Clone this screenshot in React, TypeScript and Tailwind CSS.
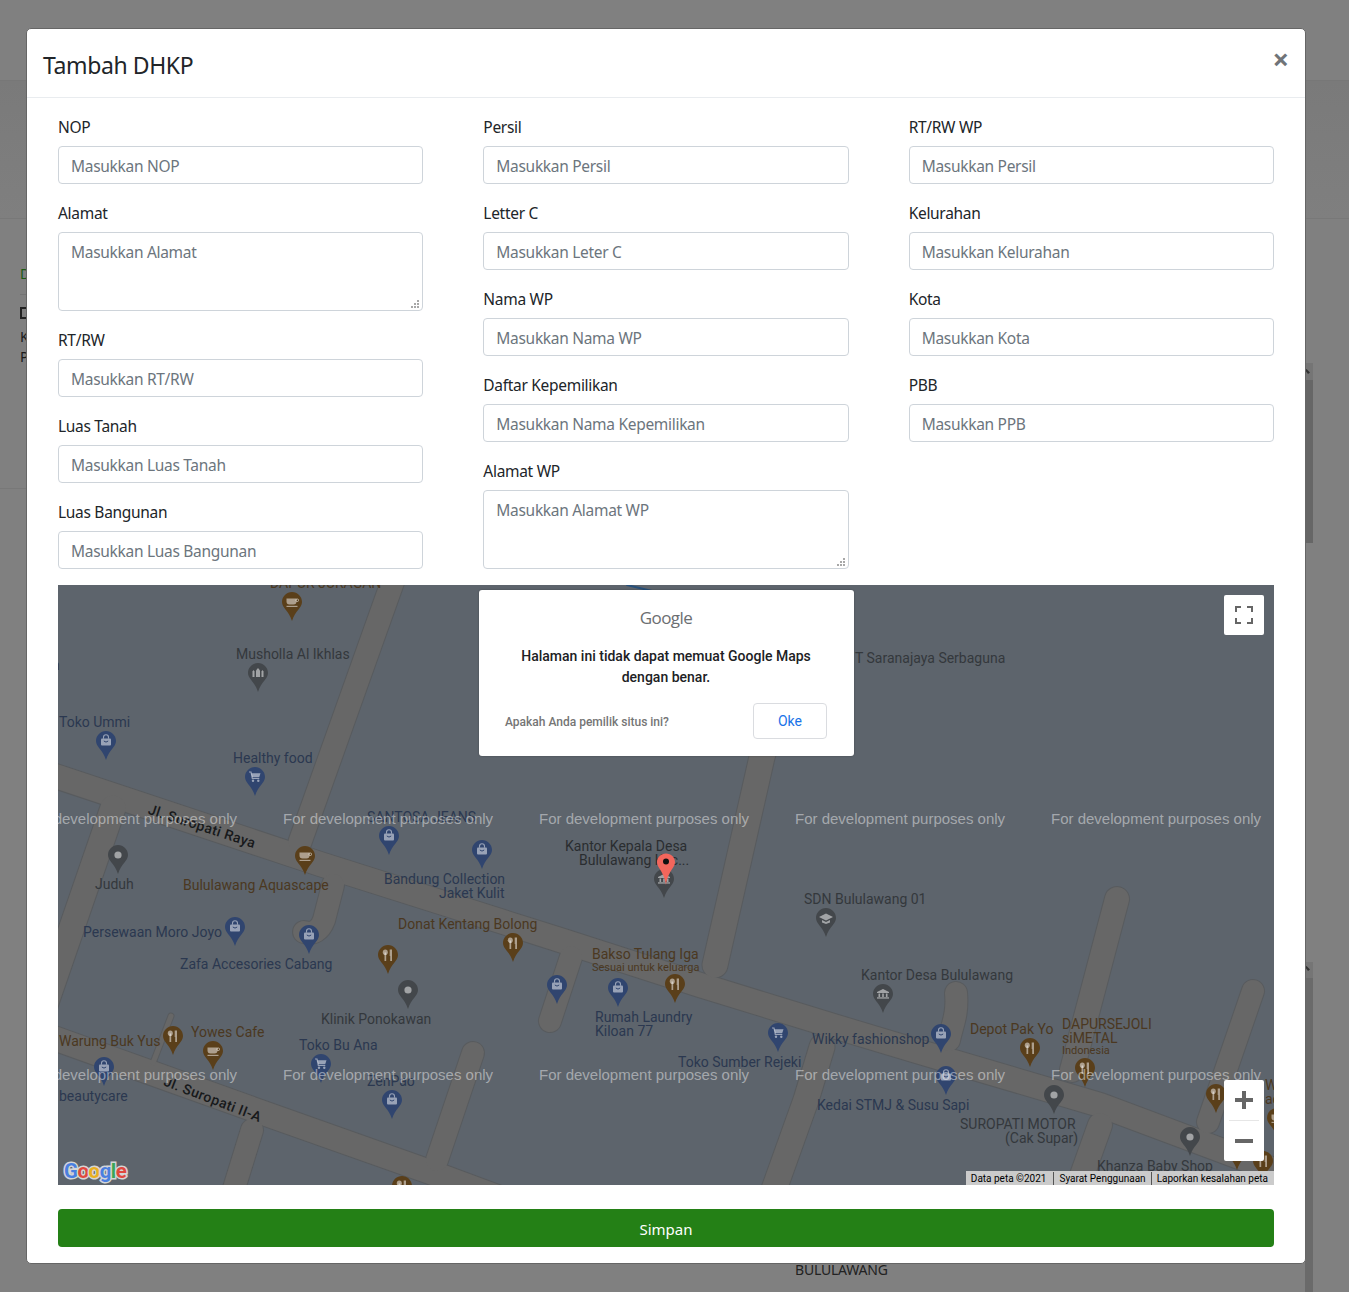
import React from 'react';

type Field = { label: string; placeholder: string; area?: boolean };

const columns: Field[][] = [
  [
    { label: 'NOP', placeholder: 'Masukkan NOP' },
    { label: 'Alamat', placeholder: 'Masukkan Alamat', area: true },
    { label: 'RT/RW', placeholder: 'Masukkan RT/RW' },
    { label: 'Luas Tanah', placeholder: 'Masukkan Luas Tanah' },
    { label: 'Luas Bangunan', placeholder: 'Masukkan Luas Bangunan' },
  ],
  [
    { label: 'Persil', placeholder: 'Masukkan Persil' },
    { label: 'Letter C', placeholder: 'Masukkan Leter C' },
    { label: 'Nama WP', placeholder: 'Masukkan Nama WP' },
    { label: 'Daftar Kepemilikan', placeholder: 'Masukkan Nama Kepemilikan' },
    { label: 'Alamat WP', placeholder: 'Masukkan Alamat WP', area: true },
  ],
  [
    { label: 'RT/RW WP', placeholder: 'Masukkan Persil' },
    { label: 'Kelurahan', placeholder: 'Masukkan Kelurahan' },
    { label: 'Kota', placeholder: 'Masukkan Kota' },
    { label: 'PBB', placeholder: 'Masukkan PPB' },
  ],
];

// roads in page coordinates: [width, path]
const roads: [number, string][] = [
  [24, 'M10 761 L320 864 L560 940 L700 985 L830 1025 L920 1052 L1100 1105 L1290 1176'],
  [24, 'M20 1026 L255 1110 L430 1172 L500 1198'],
  [23, 'M395 575 L300 842'],
  [25, 'M790 660 L762 757 L715 965'],
  [25, 'M113 808 L40 1020'],
  [22, 'M333 885 L324 920 Q318 936 304 932'],
  [22, 'M252 1130 L232 1195'],
  [22, 'M473 1053 L437 1160'],
  [22, 'M571 957 L550 1021'],
  [25, 'M822 1047 L806 1100 L772 1195'],
  [24, 'M1117 899 L1072 1070'],
  [22, 'M956 993 C958 1015 952 1025 949 1040'],
  [22, 'M1253 991 L1208 1122'],
  [24, 'M1100 1125 L1075 1195'],
  [5, 'M171 1016 L153 1063'],
];

type Tone = 'blue' | 'brown' | 'gray' | 'dark';

const toneClass: Record<Tone, string> = {
  blue: 'text-[#2b3850]',
  brown: 'text-[#4b3821]',
  gray: 'text-[#34383c]',
  dark: 'text-[#2a2d30]',
};

const labels: [string, number, number, Tone, boolean?][] = [
  ['DAPUR JURAGAN', 270, 583, 'brown'],
  ['n', 52, 665, 'gray'],
  ['Musholla Al Ikhlas', 236, 654, 'gray'],
  ['Toko Ummi', 59, 722, 'blue'],
  ['Healthy food', 233, 758, 'blue'],
  ['SANTOSA JEANS', 367, 817, 'blue'],
  ['Juduh', 95, 884, 'gray'],
  ['Bululawang Aquascape', 183, 885, 'brown'],
  ['Bandung Collection', 384, 879, 'blue'],
  ['Jaket Kulit', 439, 893, 'blue'],
  ['Kantor Kepala Desa', 565, 846, 'dark'],
  ['Bululawang Kec...', 579, 860, 'dark'],
  ['Persewaan Moro Joyo', 83, 932, 'blue'],
  ['Zafa Accesories Cabang', 180, 964, 'blue'],
  ['Donat Kentang Bolong', 398, 924, 'brown'],
  ['Klinik Ponokawan', 321, 1019, 'gray'],
  ['Warung Buk Yus', 59, 1041, 'brown'],
  ['Yowes Cafe', 191, 1032, 'brown'],
  ['Toko Bu Ana', 299, 1045, 'blue'],
  ['ZenPao', 367, 1081, 'blue'],
  ['beautycare', 59, 1096, 'blue'],
  ['Bakso Tulang Iga', 592, 954, 'brown'],
  ['Sesuai untuk keluarga', 592, 967, 'brown', true],
  ['Rumah Laundry', 595, 1017, 'blue'],
  ['Kiloan 77', 595, 1031, 'blue'],
  ['Toko Sumber Rejeki', 678, 1062, 'blue'],
  ['Wikky fashionshop', 812, 1039, 'blue'],
  ['Kedai STMJ & Susu Sapi', 817, 1105, 'blue'],
  ['T Saranajaya Serbaguna', 855, 658, 'gray'],
  ['SDN Bululawang 01', 804, 899, 'gray'],
  ['Kantor Desa Bululawang', 861, 975, 'gray'],
  ['Depot Pak Yo', 970, 1029, 'brown'],
  ['DAPURSEJOLI', 1062, 1024, 'brown'],
  ['siMETAL', 1062, 1038, 'brown'],
  ['Indonesia', 1062, 1050, 'brown', true],
  ['SUROPATI MOTOR', 960, 1124, 'gray'],
  ['(Cak Supar)', 1005, 1138, 'gray'],
  ['Khanza Baby Shop', 1097, 1166, 'gray'],
  ['Wa', 1265, 1085, 'brown'],
  ['ac', 1265, 1099, 'brown'],
];

type Glyph = 'bag' | 'cart' | 'cup' | 'fork' | 'dot' | 'mosque' | 'bank' | 'school';

const pinColor: Record<'blue' | 'brown' | 'gray', string> = {
  blue: '#30456f',
  brown: '#5a3f1a',
  gray: '#43474b',
};

const pins: [number, number, Glyph, 'blue' | 'brown' | 'gray'][] = [
  [292, 592, 'cup', 'brown'],
  [258, 663, 'mosque', 'gray'],
  [106, 731, 'bag', 'blue'],
  [255, 767, 'cart', 'blue'],
  [118, 845, 'dot', 'gray'],
  [305, 846, 'cup', 'brown'],
  [389, 826, 'bag', 'blue'],
  [482, 840, 'bag', 'blue'],
  [664, 869, 'bank', 'gray'],
  [826, 908, 'school', 'gray'],
  [235, 917, 'bag', 'blue'],
  [309, 925, 'bag', 'blue'],
  [388, 945, 'fork', 'brown'],
  [408, 980, 'dot', 'gray'],
  [513, 933, 'fork', 'brown'],
  [557, 975, 'bag', 'blue'],
  [618, 978, 'bag', 'blue'],
  [675, 974, 'fork', 'brown'],
  [778, 1023, 'cart', 'blue'],
  [883, 984, 'bank', 'gray'],
  [941, 1024, 'bag', 'blue'],
  [173, 1026, 'fork', 'brown'],
  [213, 1041, 'cup', 'brown'],
  [104, 1057, 'bag', 'blue'],
  [321, 1054, 'cart', 'blue'],
  [392, 1090, 'bag', 'blue'],
  [1030, 1038, 'fork', 'brown'],
  [1085, 1058, 'fork', 'brown'],
  [946, 1066, 'bag', 'blue'],
  [1054, 1085, 'dot', 'gray'],
  [1190, 1127, 'dot', 'gray'],
  [1216, 1084, 'fork', 'brown'],
  [1277, 1108, 'cup', 'brown'],
  [1263, 1151, 'fork', 'brown'],
  [1237, 1141, 'fork', 'brown'],
  [402, 1176, 'fork', 'brown'],
];

function PinGlyph({ kind, color }: { kind: Glyph; color: string }) {
  const c = 'rgba(255,255,255,0.5)';
  switch (kind) {
    case 'bag':
      return (
        <g>
          <path d="M7.5 7.500V6.200a2.500 2.500 0 0 1 5 0v1.300" fill="none" stroke={c} strokeWidth="1.100" />
          <rect x="5" y="7.500" width="10" height="7" rx="1" fill={c} />
          <path d="M7.800 10q2.200 2.200 4.400 0" fill="none" stroke={color} strokeWidth="1" />
        </g>
      );
    case 'cart':
      return (
        <g>
          <path d="M4 5h2l1.300 6.500h7" fill="none" stroke={c} strokeWidth="1.200" />
          <path d="M6.300 6.200h9.200l-1.300 4h-7z" fill={c} />
          <circle cx="8" cy="13.800" r="1.200" fill={c} />
          <circle cx="13.300" cy="13.800" r="1.200" fill={c} />
        </g>
      );
    case 'cup':
      return (
        <g>
          <path d="M4.500 6.500h10v3a3 3 0 0 1-3 3h-4a3 3 0 0 1-3-3z" fill={c} />
          <rect x="14" y="7" width="2.500" height="2.500" rx="1" fill="none" stroke={c} strokeWidth="1" />
          <rect x="4.500" y="13.800" width="11" height="1.200" fill={c} />
        </g>
      );
    case 'fork':
      return (
        <g>
          <ellipse cx="7.300" cy="7.300" rx="2.500" ry="2.800" fill={c} />
          <rect x="6.500" y="7.500" width="1.700" height="8.500" fill={c} />
          <path d="M11.700 4.500h2.300v11.500h-1.800v-5h-.5z" fill={c} />
        </g>
      );
    case 'dot':
      return <circle cx="10" cy="10" r="3.600" fill={c} />;
    case 'mosque':
      return (
        <g fill={c}>
          <path d="M8 14V7.500l2-2.500 2 2.500V14z" />
          <path d="M4.500 14V8.500l1-1.500 1 1.500V14z" />
          <path d="M13.500 14V8.500l1-1.500 1 1.500V14z" />
        </g>
      );
    case 'bank':
      return (
        <g fill={c}>
          <path d="M10 5l6 3v1H4V8z" />
          <rect x="5.500" y="9.500" width="1.600" height="3.500" />
          <rect x="9.200" y="9.500" width="1.600" height="3.500" />
          <rect x="12.900" y="9.500" width="1.600" height="3.500" />
          <rect x="4" y="13.300" width="12" height="1.300" />
        </g>
      );
    case 'school':
      return (
        <g fill={c}>
          <path d="M10 5.500l7 3.500-7 3.500-7-3.500z" />
          <path d="M6 12l4 2 4-2v2.500l-4 1.500-4-1.500z" />
        </g>
      );
  }
}

function MapPin({ x, y, kind, tone }: { x: number; y: number; kind: Glyph; tone: 'blue' | 'brown' | 'gray' }) {
  const color = pinColor[tone];
  return (
    <svg
      className="absolute"
      style={{ left: x - 10 - 58, top: y - 585 }}
      width="20"
      height="29"
      viewBox="0 0 20 29"
    >
      <path d="M10 0C4.500 0 0 4.500 0 10c0 6 6.500 8 10 19 3.500-11 10-13 10-19C20 4.500 15.500 0 10 0z" fill={color} />
      <PinGlyph kind={kind} color={color} />
    </svg>
  );
}

function FormField({ label, placeholder, area }: Field) {
  return (
    <div className="mb-4">
      <label className="block mb-2 h-6 text-[15.5px] tracking-[-0.3px] leading-[26px] text-[#212529]">{label}</label>
      {area ? (
        <div className="relative">
          <textarea
            placeholder={placeholder}
            className="block w-full h-[79px] resize-none px-3 pt-[7px] pb-[5px] border border-[#ced4da] rounded bg-white text-[15.5px] tracking-[-0.3px] leading-6 outline-none placeholder:text-[#6c757d]"
          />
          {/* resize grip */}
          <svg className="absolute right-1 bottom-[3px]" width="8" height="8" viewBox="0 0 8 8" fill="#a8a8a8">
            <path d="M6 0h2v2H6zM3 3h2v2H3zM6 3h2v2H6zM0 6h2v2H0zM3 6h2v2H3zM6 6h2v2H6z" />
          </svg>
        </div>
      ) : (
        <input
          placeholder={placeholder}
          className="block w-full h-[38px] px-3 pt-[7px] pb-[5px] border border-[#ced4da] rounded bg-white text-[15.5px] tracking-[-0.3px] leading-6 outline-none placeholder:text-[#6c757d]"
        />
      )}
    </div>
  );
}

function MapPanel() {
  const watermarkRows = [819, 1075];
  const watermarkCols = [27, 283, 539, 795, 1051];
  return (
    <div className="relative h-[600px] overflow-hidden bg-[#5d646c] font-['Roboto',sans-serif]">
      {/* base map */}
      <svg className="absolute inset-0" width="1216" height="600" viewBox="0 0 1216 600" fill="none">
        <g transform="translate(-58 -585)" strokeLinecap="round" strokeLinejoin="round">
          <path d="M627 585 L652 591" stroke="#27507a" strokeWidth="2" />
          {roads.map(([w, d], i) => (
            <path key={`edge-${i}`} d={d} stroke="#585b5e" strokeWidth={w + 2} />
          ))}
          {roads.map(([w, d], i) => (
            <path key={`fill-${i}`} d={d} stroke="#676767" strokeWidth={w} />
          ))}
        </g>
      </svg>

      {/* road names */}
      <span className="absolute left-[88px] top-[233px] rotate-[18deg] whitespace-nowrap text-[14px] leading-4 font-medium tracking-[0.4px] text-[#17191b]">
        Jl. Suropati Raya
      </span>
      <span className="absolute left-[103px] top-[506px] rotate-[21deg] whitespace-nowrap text-[14px] leading-4 font-medium tracking-[0.4px] text-[#17191b]">
        Jl. Suropati II-A
      </span>

      {labels.map(([text, x, y, tone, small]) => (
        <span
          key={text + x}
          className={`absolute -translate-y-1/2 whitespace-nowrap leading-none ${small ? 'text-[11px]' : 'text-[14px]'} ${toneClass[tone]}`}
          style={{ left: x - 58, top: y - 585 }}
        >
          {text}
        </span>
      ))}

      {pins.map(([x, y, kind, tone]) => (
        <MapPin key={`${x}-${y}`} x={x} y={y} kind={kind} tone={tone} />
      ))}

      {/* location marker */}
      <svg className="absolute left-[598px] top-[268px]" width="20" height="33" viewBox="0 0 20 33">
        <path d="M10 0.500C5 0.500 1 4.500 1 9c0 6 7 9 9 23 2-14 9-17 9-23 0-4.500-4-8.500-9-8.500z" fill="#f3665c" />
        <circle cx="10" cy="8.500" r="3" fill="#111" />
      </svg>

      {/* dev watermark */}
      {watermarkRows.map((y) =>
        watermarkCols.map((x) => (
          <span
            key={`${x}-${y}`}
            className="absolute -translate-y-1/2 whitespace-nowrap text-[15px] leading-5 text-white/45 font-['Liberation_Sans',sans-serif]"
            style={{ left: x - 58, top: y - 585 }}
          >
            For development purposes only
          </span>
        )),
      )}

      {/* google logo */}
      <div className="absolute left-[6px] bottom-0 flex text-[20.5px] leading-7 font-bold tracking-[-0.5px] font-['Roboto',sans-serif] [-webkit-text-stroke:3px_#d4d5d6] [paint-order:stroke_fill]">
        <span className="text-[#4a7fe0]">G</span>
        <span className="text-[#e0483e]">o</span>
        <span className="text-[#eab020]">o</span>
        <span className="text-[#4a7fe0]">g</span>
        <span className="text-[#3aa655]">l</span>
        <span className="text-[#e0483e]">e</span>
      </div>

      {/* attribution */}
      <div className="absolute right-0 bottom-0 flex h-[14px] items-center bg-[#cbcbcb] pt-px text-[10px] leading-[13px] text-black">
        <span className="pl-[5px] pr-[7px]">Data peta ©2021</span>
        <span className="px-[5px] border-l border-[#555]">Syarat Penggunaan</span>
        <span className="pl-[5px] pr-[6px] border-l border-[#555]">Laporkan kesalahan peta</span>
      </div>

      {/* fullscreen */}
      <button className="absolute right-[10px] top-[10px] flex h-10 w-10 items-center justify-center rounded-[2px] bg-white">
        <svg width="18" height="18" viewBox="0 0 18 18" fill="none" stroke="#666" strokeWidth="2">
          <path d="M1 6V1h5M12 1h5v5M17 12v5h-5M6 17H1v-5" />
        </svg>
      </button>

      {/* zoom */}
      <div className="absolute right-[10px] top-[495px] flex w-10 flex-col items-center rounded-[2px] bg-white">
        <div className="flex h-10 w-full items-center justify-center">
          <svg width="18" height="18" viewBox="0 0 18 18" fill="#666">
            <path d="M7 0h4v7h7v4h-7v7H7v-7H0V7h7z" />
          </svg>
        </div>
        <div className="h-px w-[30px] bg-[#e6e6e6]" />
        <div className="flex h-10 w-full items-center justify-center">
          <svg width="18" height="18" viewBox="0 0 18 18" fill="#666">
            <path d="M0 7h18v4H0z" />
          </svg>
        </div>
      </div>

      {/* load error dialog */}
      <div className="absolute left-[421px] top-[5px] w-[375px] h-[166px] rounded-[3px] bg-white pl-[26px] pr-[27px] pt-[16px] shadow-[0_0_2px_rgba(0,0,0,0.3)]">
        <div className="text-center text-[17px] leading-6 tracking-[-0.6px] text-[#6b6e71] font-['Open_Sans',sans-serif]">Google</div>
        <p className="mt-4 text-center text-[14px] leading-[21px] font-medium text-[#202124]">
          Halaman ini tidak dapat memuat Google Maps dengan benar.
        </p>
        <div className="mt-[15px] flex items-center justify-between">
          <span className="pt-0.5 text-[12px] font-medium text-[#757575]">Apakah Anda pemilik situs ini?</span>
          <button className="h-9 w-[74px] rounded border border-[#dadce0] text-[14px] text-[#1a73e8]">Oke</button>
        </div>
      </div>
    </div>
  );
}

export default function App() {
  return (
    <div className="relative h-[1292px] overflow-hidden bg-[#808080] font-['Noto_Sans',sans-serif]">
      {/* page behind the backdrop */}
      <div className="h-[81px] border-b border-[#777]" />
      <div className="h-[138px] border-b border-[#787878] bg-gradient-to-b from-[#7a7a7a] to-[#7f7f7f]" />
      <div className="flex h-[1073px]">
        <div className="h-[270px] w-[795px] border-b border-[#787878] pl-5 pt-[45px] text-[14px] text-[#1b1b1b]">
          <div className="leading-5 text-[#1c5a14]">D</div>
          <div className="mt-[10px] h-px w-2 bg-[#747474]" />
          <div className="mt-3 h-3 w-3 border-2 border-[#222]" />
          <div className="mt-2 leading-5">K</div>
          <div className="leading-5">P</div>
        </div>
        <div className="flex-1 pt-[1041px] text-[14px] tracking-[-0.2px] leading-5 text-[#222]">BULULAWANG</div>
        <div className="mr-9 w-2 pt-[144px]">
          <div className="h-[17px] bg-[#757575]">
            <svg width="8" height="17" viewBox="0 0 8 17" fill="#333">
              <path d="M0 7l3 4 2-1.500L1.500 6z" />
            </svg>
          </div>
          <div className="h-[163px] bg-[#666]" />
          <div className="mt-[419px] h-4 bg-[#757575]">
            <svg width="8" height="16" viewBox="0 0 8 16" fill="#333">
              <path d="M0 5l3 4 2-1.500L1.500 4z" />
            </svg>
          </div>
          <div className="h-[314px] bg-[#6a6a6a]" />
        </div>
      </div>

      {/* modal */}
      <div className="absolute left-[26px] top-[28px] w-[1280px] h-[1236px] rounded-[5px] border border-[#666] bg-white">
        <div className="flex h-[69px] items-center justify-between border-b border-[#e9ecef] pl-4 pr-4">
          <h5 className="pt-1 text-[23px] tracking-[-0.4px] leading-[34px] text-[#212529]">Tambah DHKP</h5>
          <button className="mb-[10px] text-[29px] font-bold leading-none text-[#707478]">×</button>
        </div>
        <div className="px-[31px] pt-4">
          <div className="grid grid-cols-3 gap-x-[60px]">
            {columns.map((col, i) => (
              <div key={i}>
                {col.map((f) => (
                  <FormField key={f.label} {...f} />
                ))}
              </div>
            ))}
          </div>
          <MapPanel />
          <button className="mt-6 h-[38px] w-full rounded bg-[#248016] pt-[3px] text-[15px] text-white">Simpan</button>
        </div>
      </div>
    </div>
  );
}
